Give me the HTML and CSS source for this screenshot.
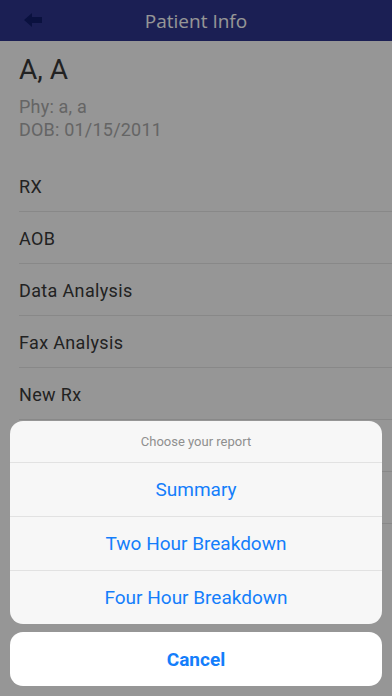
FILE: index.html
```html
<!DOCTYPE html>
<html lang="en">
  <head>
    <meta charset="UTF-8" />
    <meta name="viewport" content="width=device-width, initial-scale=1.0" />
    <title>Patient Info</title>
    <link rel="stylesheet" href="styles.css">
  </head>
  <body>
    <header class="top-bar">
      <button class="back-button">
        <svg width="18" height="14" viewBox="0 0 18 14">
          <path d="M0 7 L8 0 L8 4 L18 4 L18 10 L8 10 L8 14 Z" fill="#111d6b" />
        </svg>
      </button>
      <h1 class="title">Patient Info</h1>
    </header>

    <div class="patient">
      <div class="patient-name">A, A</div>
      <div class="patient-meta">Phy: a, a</div>
      <div class="patient-meta">DOB: 01/15/2011</div>
    </div>

    <ul class="menu-list">
      <li>RX</li>
      <li>AOB</li>
      <li>Data Analysis</li>
      <li>Fax Analysis</li>
      <li>New Rx</li>
      <li>Reports</li>
      <li>Notes</li>
    </ul>

    <div class="dim"></div>

    <div class="action-sheet">
      <div class="sheet-group">
        <div class="sheet-title">Choose your report</div>
        <button class="sheet-option">Summary</button>
        <button class="sheet-option">Two Hour Breakdown</button>
        <button class="sheet-option">Four Hour Breakdown</button>
      </div>
      <button class="sheet-cancel">Cancel</button>
    </div>
  </body>
</html>
```

FILE: styles.css
```css
body {
  margin: 0;
  background-color: #fff;
  font-family: Roboto, "Liberation Sans", sans-serif;
  height: 696px;
  overflow: hidden;
  position: relative;
}
.top-bar {
  height: 41px;
  background-color: #2e3590;
  display: flex;
  align-items: center;
  justify-content: center;
  position: relative;
}
.back-button {
  position: absolute;
  left: 24px;
  top: 13px;
  background: transparent;
  border: none;
  padding: 0;
  display: flex;
}
.title {
  margin: 0;
  color: #fff;
  font-family: "Open Sans", sans-serif;
  font-weight: 400;
  font-size: 19px;
}
.patient {
  padding: 12px 19px 0;
}
.patient-name {
  font-size: 28px;
  line-height: 34px;
  color: #3a3a3a;
  margin-bottom: 8px;
}
.patient-meta {
  font-size: 18px;
  line-height: 23px;
  letter-spacing: 0.2px;
  color: #acacac;
}
.menu-list {
  list-style: none;
  margin: 19px 0 0 19px;
  padding: 0;
}
.menu-list li {
  height: 52px;
  box-sizing: border-box;
  padding-top: 3px;
  display: flex;
  align-items: center;
  font-size: 18px;
  line-height: 22px;
  letter-spacing: 0.35px;
  color: #3a3a3a;
  border-bottom: 1px solid #e8e8e8;
}
.dim {
  position: absolute;
  inset: 0;
  background-color: rgba(0, 0, 0, 0.41);
}
.action-sheet {
  position: absolute;
  left: 10px;
  right: 10px;
  bottom: 10px;
  display: flex;
  flex-direction: column;
  gap: 8px;
}
.sheet-group {
  background-color: #f7f7f7;
  border-radius: 13px;
  overflow: hidden;
}
.sheet-title {
  height: 41px;
  display: flex;
  align-items: center;
  justify-content: center;
  font-size: 13px;
  color: #8f8f8f;
}
.sheet-option,
.sheet-cancel {
  display: block;
  width: 100%;
  height: 54px;
  border: none;
  background: transparent;
  font-family: Roboto, "Liberation Sans", sans-serif;
  font-size: 19px;
  color: #147efb;
  padding: 0;
}
.sheet-option {
  border-top: 1px solid #e2e2e2;
}
.sheet-cancel {
  background-color: #fff;
  border-radius: 13px;
  font-weight: 700;
}
```
